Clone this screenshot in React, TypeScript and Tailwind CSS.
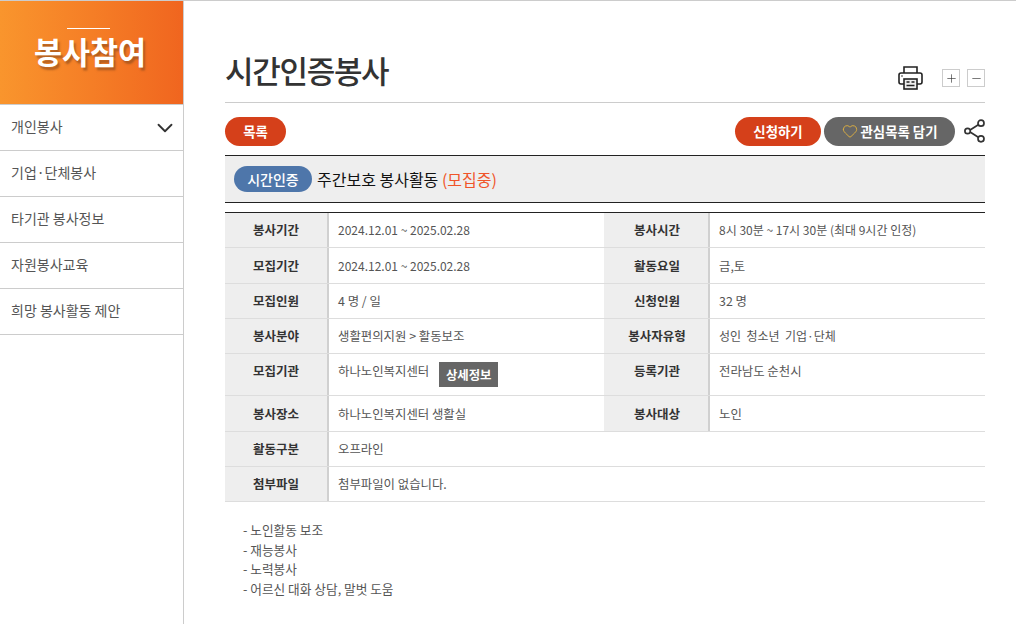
import { ChevronDown, Heart, Minus, Plus } from "lucide-react";

const font = "font-['Noto_Sans_CJK_KR','Noto_Sans',sans-serif]";

const menu = ["개인봉사", "기업·단체봉사", "타기관 봉사정보", "자원봉사교육", "희망 봉사활동 제안"];

const PrinterIcon = () => (
  <svg width="25" height="24" viewBox="0 0 25 24" fill="none" stroke="#222" strokeWidth="1.6" className="mr-[19px]">
    <path d="M6 7V1h13v6" />
    <path d="M6 18H3a2 2 0 0 1-2-2V9a2 2 0 0 1 2-2h19a2 2 0 0 1 2 2v7a2 2 0 0 1-2 2h-3" />
    <rect x="6" y="13" width="13" height="10" fill="#eee" />
    <path d="M8.5 16h3M13.5 16h3M8.5 19.5h8" strokeWidth="1.3" />
    <circle cx="4" cy="10" r="0.8" fill="#222" stroke="none" />
  </svg>
);

const ShareIcon = () => (
  <svg width="21" height="24" viewBox="0 0 21 24" fill="none" stroke="#333" strokeWidth="1.7" className="ml-[9px]">
    <path d="M4.5 12L15.5 5M4.5 12l11 7" />
    <circle cx="17" cy="4.2" r="3" fill="#fff" />
    <circle cx="3.6" cy="12" r="2.7" fill="#fff" />
    <circle cx="17" cy="19.8" r="3" fill="#fff" />
  </svg>
);

const Cell = ({ label, value, w, thW, pt }: { label: string; value: React.ReactNode; w: string; thW: string; pt: string }) => (
  <div className={`flex ${w}`}>
    <div className={`${thW} ${pt} shrink-0 bg-[#eeeeee] border-r-2 border-[#d0d0d0] flex justify-center text-[12.5px] font-bold text-[#333] leading-[20px]`}>
      {label}
    </div>
    <div className={`${pt} flex-1 pl-[9px] text-[12.4px] text-[#555] leading-[20px] whitespace-pre`}>{value}</div>
  </div>
);

const Row = ({ h, pt = "pt-[7px]", cells }: { h: string; pt?: string; cells: [string, React.ReactNode][] }) => (
  <div className={`flex border-b border-[#dddddd] ${h}`}>
    <Cell label={cells[0][0]} value={cells[0][1]} w={cells.length > 1 ? "w-[379px]" : "w-full"} thW="w-[104px]" pt={pt} />
    {cells[1] && <Cell label={cells[1][0]} value={cells[1][1]} w="w-[381px]" thW="w-[106px] pl-[2px]" pt={pt} />}
  </div>
);

const Small = ({ children }: { children: string }) => <span className="text-[12px]">{children}</span>;

export default function App() {
  return (
    <div className={`${font} w-[1016px] h-[624px] overflow-hidden bg-white border-t border-[#cccccc] flex`}>
      <aside className="w-[184px] shrink-0 h-full border-r border-[#cccccc]">
        <div className="h-[103px] bg-gradient-to-r from-[#f9952d] to-[#f0651f] flex flex-col items-center pt-[27px] pr-[6px]">
          <div className="w-[43px] h-px bg-white" />
          <div className="text-[30.5px] leading-[40px] font-bold text-white mt-[2px] ml-[3px] [text-shadow:2px_3px_2px_rgba(150,80,30,0.7)]">봉사참여</div>
        </div>
        {menu.map((m, i) => (
          <div key={m} className="h-[46px] last:h-[47px] border-t border-[#cccccc] last:border-b flex items-center justify-between pl-[11px] pr-[5px] text-[14px] text-[#555]">
            <span className="mb-[2px]">{m}</span>
            {i === 0 && <ChevronDown size={26} strokeWidth={1.7} className="text-[#333]" />}
          </div>
        ))}
      </aside>

      <main className="w-[760px] ml-[41px]">
        <div className="h-[102px] border-b border-[#cccccc] flex items-end justify-between">
          <h1 className="text-[31px] leading-[46px] font-medium tracking-[-1.3px] text-[#333] mb-[9px]">시간인증봉사</h1>
          <div className="flex items-center mb-[12px]">
            <PrinterIcon />
            <button className="w-[18px] h-[18px] border border-[#cccccc] flex items-center justify-center text-[#333] mr-[7px]">
              <Plus size={13} strokeWidth={1.2} />
            </button>
            <button className="w-[18px] h-[18px] border border-[#cccccc] flex items-center justify-center text-[#333]">
              <Minus size={13} strokeWidth={1.2} />
            </button>
          </div>
        </div>

        <div className="flex items-center justify-between mt-[13px] h-[30px]">
          <button className="w-[61px] h-[29px] rounded-full bg-[#d5401a] text-white text-[13.4px] font-bold">목록</button>
          <div className="flex items-center">
            <button className="w-[86px] h-[29px] rounded-full bg-[#d5401a] text-white text-[13.4px] font-bold">신청하기</button>
            <button className="w-[131px] h-[29px] rounded-full bg-[#666666] text-white text-[13.4px] font-bold ml-[3px] flex items-center justify-center gap-[3px]">
              <Heart size={16} strokeWidth={1.4} className="text-[#e0b040]" />
              관심목록 담기
            </button>
            <ShareIcon />
          </div>
        </div>

        <div className="mt-[9px] h-[48px] bg-[#eeeeee] border-y border-[#222] flex items-center pl-[9px]">
          <span className="w-[78px] h-[26px] rounded-full bg-[#4e76aa] text-white text-[14px] font-medium flex items-center justify-center">시간인증</span>
          <span className="ml-[5px] text-[16px] text-[#111]">주간보호 봉사활동 <span className="text-[#f0552a]">(모집중)</span></span>
        </div>

        <div className="mt-[9px] border-t border-[#222]">
          <Row h="h-[35px]" cells={[["봉사기간", <Small>2024.12.01 ~ 2025.02.28</Small>], ["봉사시간", <Small>8시 30분 ~ 17시 30분 (최대 9시간 인정)</Small>]]} />
          <Row h="h-[36px]" pt="pt-[8px]" cells={[["모집기간", <Small>2024.12.01 ~ 2025.02.28</Small>], ["활동요일", "금,토"]]} />
          <Row h="h-[35px]" cells={[["모집인원", "4 명 / 일"], ["신청인원", "32 명"]]} />
          <Row h="h-[35px]" cells={[["봉사분야", "생활편의지원 > 활동보조"], ["봉사자유형", <Small>성인  청소년  기업·단체</Small>]]} />
          <Row
            h="h-[42px]"
            cells={[
              [
                "모집기관",
                <span className="flex items-start">
                  하나노인복지센터
                  <span className="ml-[10px] mt-px w-[59px] h-[25px] bg-[#666666] text-white font-bold flex items-center justify-center">상세정보</span>
                </span>,
              ],
              ["등록기관", "전라남도 순천시"],
            ]}
          />
          <Row h="h-[36px]" pt="pt-[8px]" cells={[["봉사장소", "하나노인복지센터 생활실"], ["봉사대상", "노인"]]} />
          <Row h="h-[35px]" cells={[["활동구분", "오프라인"]]} />
          <Row h="h-[35px]" cells={[["첨부파일", "첨부파일이 없습니다."]]} />
        </div>

        <div className="mt-[18px] pl-[18px] text-[12.7px] leading-[19.7px] text-[#555]">
          <p>- 노인활동 보조</p>
          <p>- 재능봉사</p>
          <p>- 노력봉사</p>
          <p>- 어르신 대화 상담, 말벗 도움</p>
        </div>
      </main>
    </div>
  );
}
